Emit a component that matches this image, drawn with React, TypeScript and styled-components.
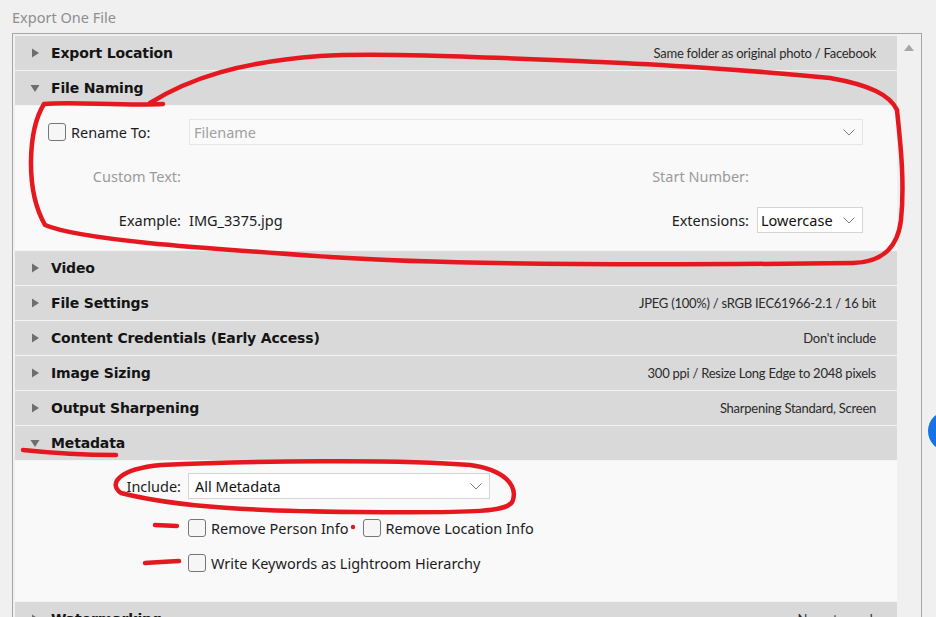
import React from "react";
import styled, { createGlobalStyle } from "styled-components";

const GlobalStyle = createGlobalStyle`
  html, body { margin: 0; padding: 0; background: #f0f0f0; }
  * { box-sizing: border-box; }
`;

const Page = styled.div`
  position: relative;
  width: 936px;
  height: 617px;
  overflow: hidden;
  background: #f0f0f0;
  font-family: "Noto Sans", "Open Sans", sans-serif;
`;

const Title = styled.div`
  height: 33px;
  padding-left: 12px;
  display: flex;
  align-items: center;
  font-size: 14.5px;
  color: #8e8e8e;
`;

const Frame = styled.div`
  margin-left: 12px;
  width: 910px;
  height: 600px;
  border: 1px solid #a6a6a6;
  display: flex;
  background: #f0f0f0;
`;

const List = styled.div`
  width: 884px;
  padding: 2px 0 0 2px;
  display: flex;
  flex-direction: column;
`;

const Gutter = styled.div`
  flex: 1;
  display: flex;
  justify-content: center;
  padding-top: 10px;
`;

const Header = styled.div`
  flex: none;
  height: 35px;
  display: flex;
  align-items: center;
  background: #d9d9d9;
  border-bottom: 1px solid #f4f4f4;
  padding: 0 21px 0 15px;
`;

const Arrow = styled.svg`
  width: 10px;
  height: 10px;
  flex: none;
`;

const HeaderTitle = styled.span`
  margin-left: 11px;
  font-family: "DejaVu Sans", Verdana, sans-serif;
  font-weight: 700;
  font-size: 14px;
  letter-spacing: -0.15px;
  color: #141414;
`;

const Summary = styled.span`
  margin-left: auto;
  font-family: Lato, "Noto Sans", sans-serif;
  font-size: 13px;
  letter-spacing: -0.25px;
  color: #2a2a2a;
`;

const Body = styled.div<{ $h: number }>`
  flex: none;
  height: ${(p) => p.$h}px;
  background: #f9f9f9;
  border-bottom: 1px solid #f4f4f4;
  font-size: 14.5px;
  color: #1c1c1c;
`;

const NamingGrid = styled.div`
  display: grid;
  grid-template-columns: 166px 1fr auto 106px;
  grid-auto-rows: 44px;
  column-gap: 8px;
  align-items: center;
  padding: 4px 34px 0 0;
`;

const Label = styled.span<{ $dim?: boolean; $left?: boolean }>`
  justify-self: ${(p) => (p.$left ? "start" : "end")};
  color: ${(p) => (p.$dim ? "#9b9b9b" : "#1c1c1c")};
  white-space: nowrap;
`;

const CheckLabel = styled.label<{ $indent?: number }>`
  display: flex;
  align-items: center;
  gap: 5px;
  padding-left: ${(p) => p.$indent ?? 0}px;
  white-space: nowrap;
`;

const Box = styled.span`
  width: 18px;
  height: 18px;
  flex: none;
  border: 1.5px solid #767676;
  border-radius: 3px;
  background: #f6f6f6;
`;

const Select = styled.div<{ $disabled?: boolean; $pad: number; $span?: string; $w?: number }>`
  grid-column: ${(p) => p.$span ?? "auto"};
  ${(p) => (p.$w ? `width: ${p.$w}px;` : "")}
  height: 26px;
  display: flex;
  align-items: center;
  justify-content: space-between;
  padding: 0 7px 0 ${(p) => p.$pad}px;
  background: ${(p) => (p.$disabled ? "#fafafa" : "#ffffff")};
  border: 1px solid ${(p) => (p.$disabled ? "#e6e6e6" : "#d4d4d4")};
  color: ${(p) => (p.$disabled ? "#a0a0a0" : "#111111")};
  white-space: nowrap;
`;

const Value = styled.span`
  padding-left: 1px;
`;

const MetaBody = styled.div`
  display: flex;
  flex-direction: column;
  padding-top: 13px;
`;

const MetaRow = styled.div<{ $mt: number }>`
  display: flex;
  align-items: center;
  margin-top: ${(p) => p.$mt}px;
  height: 24px;
`;

const MetaLabelCell = styled.div`
  width: 166px;
  text-align: right;
  margin-right: 7px;
`;

const CheckGroup = styled.div`
  display: flex;
  align-items: center;
  gap: 14px;
`;

const BlueDot = styled.div`
  position: absolute;
  left: 928px;
  top: 411px;
  width: 40px;
  height: 40px;
  border-radius: 50%;
  background: #1473e6;
`;

const Ink = styled.svg`
  position: absolute;
  left: 0;
  top: 0;
  pointer-events: none;
`;

const Chevron = () => (
  <svg width="12" height="7" viewBox="0 0 12 7">
    <polyline points="0.5,0.5 6,6 11.5,0.5" fill="none" stroke="#7c7c7c" strokeWidth="1" />
  </svg>
);

const Tri = ({ open }: { open?: boolean }) => (
  <Arrow viewBox="0 0 10 10">
    {open ? (
      <polygon points="0.5,2 9.5,2 5,9" fill="#6e6e6e" />
    ) : (
      <polygon points="2,0.5 9,5 2,9.5" fill="#6e6e6e" />
    )}
  </Arrow>
);

const Section = ({ title, summary, open }: { title: string; summary?: string; open?: boolean }) => (
  <Header>
    <Tri open={open} />
    <HeaderTitle>{title}</HeaderTitle>
    {summary && <Summary>{summary}</Summary>}
  </Header>
);

export default function App() {
  return (
    <>
      <GlobalStyle />
      <Page>
        <Title>Export One File</Title>
        <Frame>
          <List>
            <Section title="Export Location" summary="Same folder as original photo / Facebook" />
            <Section title="File Naming" open />
            <Body $h={145}>
              <NamingGrid>
                <CheckLabel $indent={33}>
                  <Box />
                  Rename To:
                </CheckLabel>
                <Select $disabled $pad={3} $span="2 / 5">
                  <Value>Filename</Value>
                  <Chevron />
                </Select>
                <Label $dim>Custom Text:</Label>
                <span />
                <Label $dim>Start Number:</Label>
                <span />
                <Label>Example:</Label>
                <Label $left>IMG_3375.jpg</Label>
                <Label>Extensions:</Label>
                <Select $pad={2}>
                  <Value>Lowercase</Value>
                  <Chevron />
                </Select>
              </NamingGrid>
            </Body>
            <Section title="Video" />
            <Section title="File Settings" summary="JPEG (100%) / sRGB IEC61966-2.1 / 16 bit" />
            <Section title="Content Credentials (Early Access)" summary="Don't include" />
            <Section title="Image Sizing" summary="300 ppi / Resize Long Edge to 2048 pixels" />
            <Section title="Output Sharpening" summary="Sharpening Standard, Screen" />
            <Section title="Metadata" open />
            <Body $h={141}>
              <MetaBody>
                <MetaRow $mt={0}>
                  <MetaLabelCell>Include:</MetaLabelCell>
                  <Select $pad={5} $w={302}>
                    <Value>All Metadata</Value>
                    <Chevron />
                  </Select>
                </MetaRow>
                <MetaRow $mt={18}>
                  <MetaLabelCell />
                  <CheckGroup>
                    <CheckLabel>
                      <Box />
                      Remove Person Info
                    </CheckLabel>
                    <CheckLabel>
                      <Box />
                      Remove Location Info
                    </CheckLabel>
                  </CheckGroup>
                </MetaRow>
                <MetaRow $mt={11}>
                  <MetaLabelCell />
                  <CheckLabel>
                    <Box />
                    Write Keywords as Lightroom Hierarchy
                  </CheckLabel>
                </MetaRow>
              </MetaBody>
            </Body>
            <Section title="Watermarking" summary="No watermark" />
          </List>
          <Gutter>
            <svg width="10" height="7" viewBox="0 0 10 7">
              <polygon points="0,7 5,0.5 10,7" fill="#a6a6a6" />
            </svg>
          </Gutter>
        </Frame>
        <BlueDot />
        <Ink width="936" height="617" viewBox="0 0 936 617">
          <g fill="none" stroke="#e5171f" strokeWidth="4.5" strokeLinecap="round" strokeLinejoin="round">
            <path d="M163 104 C120 106 70 101 44 104 C28 130 25 190 45 225 C80 240 200 248 330 257 C420 263 600 266 853 263 C885 262 898 245 901 220 C905 180 900 140 897 110 C890 95 870 85 830 78 C750 70 650 64 600 62 C500 58 380 52 320 56 C240 62 190 78 150 103" />
            <path d="M23 450 Q70 455 116 455" />
            <path d="M121 493 C108 484 118 469 161 465 C250 461 400 459 470 465 C506 470 517 486 513 500 C510 512 480 513 357 512 C260 511 180 508 121 493" />
            <path d="M155 525 L177 526" />
            <path d="M145 563 Q160 562 179 561" />
          </g>
          <circle cx="353" cy="527" r="2.2" fill="#e5171f" />
        </Ink>
      </Page>
    </>
  );
}
